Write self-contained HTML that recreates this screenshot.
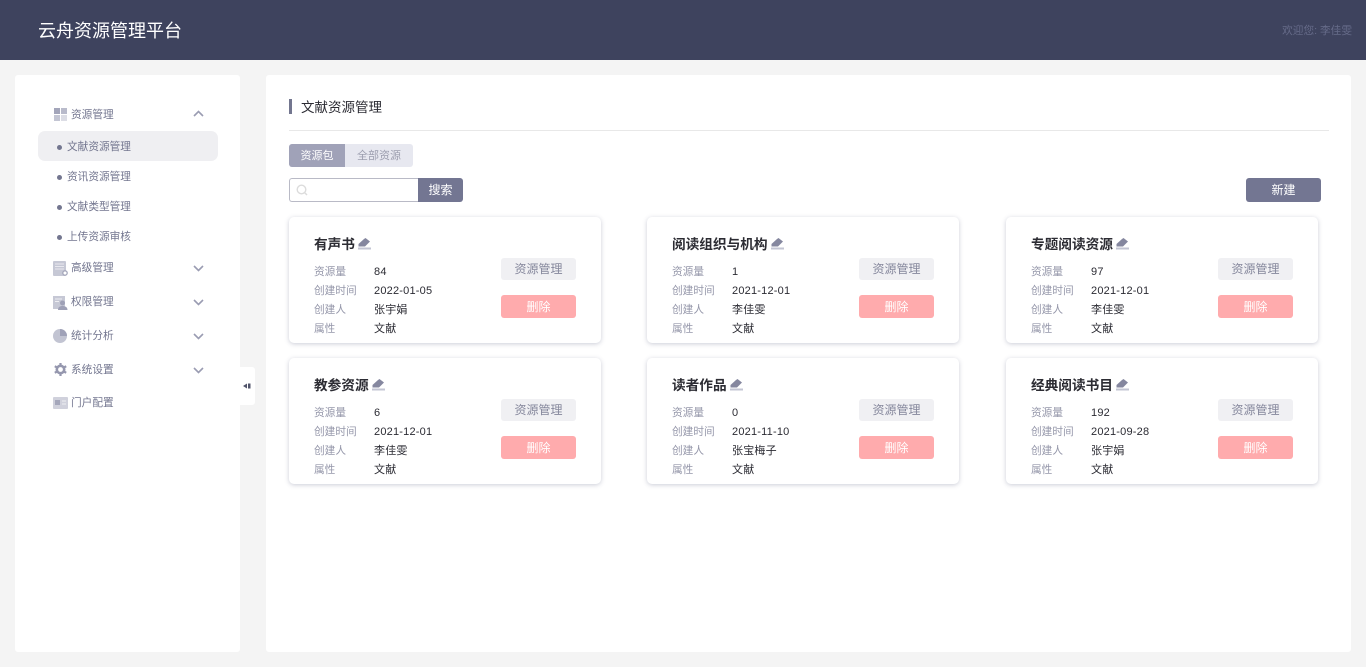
<!DOCTYPE html>
<html lang="zh-CN"><head><meta charset="utf-8"><title>云舟资源管理平台</title>
<style>
*{box-sizing:border-box;margin:0;padding:0}
html,body{width:1366px;height:667px;overflow:hidden;background:#f4f4f4;font-family:"Liberation Sans","WenQuanYi Zen Hei","Noto Sans CJK SC",sans-serif;font-size:12px}
.a{position:absolute}
.t{position:absolute;white-space:nowrap;line-height:20px;height:20px}
.hd{left:0;top:0;width:1366px;height:60px;background:#3e435e}
.panel{background:#fff;border-radius:3px}
.m{color:#73768f;font-size:10.67px;margin-top:1px}
.dot{position:absolute;width:5px;height:5px;border-radius:50%;background:#73768f;left:57px}
.card{position:absolute;width:312px;height:126px;background:#fff;border-radius:5px;box-shadow:0 1px 5px rgba(70,74,110,.28)}
.card .n{position:absolute;left:25px;top:18px;line-height:20px;font-size:13.67px;font-weight:bold;color:#2c2c33;white-space:nowrap}
.card .n svg{margin-left:3px;vertical-align:-1px}
.l{position:absolute;left:25px;color:#9597aa;line-height:19px;white-space:nowrap;font-size:10.67px;margin-top:1px}
.v{position:absolute;left:85px;color:#2b2b33;line-height:19px;white-space:nowrap;font-size:11px;letter-spacing:.2px;margin-top:1px}
.b1{position:absolute;left:212px;top:41px;width:75px;height:22px;background:#f0f0f3;border-radius:3px;color:#85879c;text-align:center;line-height:23px;font-size:12px}
.b2{position:absolute;left:212px;top:78px;width:75px;height:23px;background:#ffabad;border-radius:3px;color:#fff;text-align:center;line-height:24px;font-size:12px}
</style></head><body>
<div class="a hd"></div>
<div class="t" style="left:38px;top:21px;font-size:18px;color:#fff">云舟资源管理平台</div>
<div class="t" style="right:14px;top:21px;font-size:10.67px;color:#666b89">欢迎您: 李佳雯</div>

<div class="a panel" style="left:15px;top:75px;width:225px;height:577px"></div>
<div class="a" style="left:240px;top:367px;width:15px;height:38px;background:#fff;border-radius:0 3px 3px 0"></div>
<svg class="a" style="left:243px;top:383px" width="8" height="6" viewBox="0 0 8 6"><path d="M0 3L4 .5V5.500z" fill="#50536a"/><rect x="5" y=".5" width="2.500" height="5" fill="#50536a"/></svg>

<svg class="a" style="left:54px;top:108px" width="13" height="13" viewBox="0 0 13 13"><rect width="6" height="6" fill="#a3a5ba"/><rect x="7" width="6" height="6" fill="#b9bbcb"/><rect y="7" width="6" height="6" fill="#c3c5d3"/><rect x="7" y="7" width="6" height="6" fill="#dcdde5"/></svg>
<div class="t m" style="left:71px;top:104px">资源管理</div>
<svg class="a" style="left:193px;top:110px" width="11" height="7" viewBox="0 0 11 7"><path d="M1 6L5.500 1.500 10 6" fill="none" stroke="#9a9cb2" stroke-width="1.600"/></svg>
<div class="a" style="left:38px;top:131px;width:180px;height:30px;background:#efeff2;border-radius:7px"></div>
<div class="dot" style="top:145px"></div><div class="t m" style="left:67px;top:136px">文献资源管理</div>
<div class="dot" style="top:175px"></div><div class="t m" style="left:67px;top:166px">资讯资源管理</div>
<div class="dot" style="top:205px"></div><div class="t m" style="left:67px;top:196px">文献类型管理</div>
<div class="dot" style="top:235px"></div><div class="t m" style="left:67px;top:226px">上传资源审核</div>

<svg class="a" style="left:53px;top:261px" width="15" height="15" viewBox="0 0 15 15"><rect width="13" height="15" rx="1" fill="#c6c8d5"/><path d="M2 3h9M2 5.500h9M2 8h9" stroke="#e9e9ef" stroke-width="1"/><circle cx="12" cy="12" r="2.200" fill="#fff" stroke="#a5a7bb" stroke-width="1.300"/></svg>
<div class="t m" style="left:71px;top:257px">高级管理</div>
<svg class="a" style="left:193px;top:265px" width="11" height="7" viewBox="0 0 11 7"><path d="M1 1l4.500 4.500L10 1" fill="none" stroke="#9a9cb2" stroke-width="1.600"/></svg>

<svg class="a" style="left:53px;top:295px" width="15" height="15" viewBox="0 0 15 15"><rect y="1" width="12" height="13" fill="#c6c8d5"/><path d="M2 4h7M2 6.500h4" stroke="#eeeef2"/><circle cx="9.500" cy="8" r="2.500" fill="#9ea0b6"/><path d="M5 15c0-3 2-4 4.500-4s5 1 5 4z" fill="#9ea0b6"/></svg>
<div class="t m" style="left:71px;top:291px">权限管理</div>
<svg class="a" style="left:193px;top:299px" width="11" height="7" viewBox="0 0 11 7"><path d="M1 1l4.500 4.500L10 1" fill="none" stroke="#9a9cb2" stroke-width="1.600"/></svg>

<svg class="a" style="left:53px;top:329px" width="14" height="14" viewBox="0 0 14 14"><circle cx="7" cy="7" r="7" fill="#c2c4d2"/><path d="M7 0a7 7 0 0 1 7 7H7z" fill="#a0a2b8"/></svg>
<div class="t m" style="left:71px;top:325px">统计分析</div>
<svg class="a" style="left:193px;top:333px" width="11" height="7" viewBox="0 0 11 7"><path d="M1 1l4.500 4.500L10 1" fill="none" stroke="#9a9cb2" stroke-width="1.600"/></svg>

<svg class="a" style="left:54px;top:363px" width="13" height="13" viewBox="0 0 13 13"><circle cx="6.500" cy="6.500" r="3.700" fill="none" stroke="#9597ae" stroke-width="2.600"/><path d="M6.500 0v2.500M6.500 10.500V13M.8 3.200L3 4.500M10 8.500l2.200 1.300M.8 9.800L3 8.500M10 4.500l2.200-1.300" stroke="#9597ae" stroke-width="2.200"/></svg>
<div class="t m" style="left:71px;top:359px">系统设置</div>
<svg class="a" style="left:193px;top:367px" width="11" height="7" viewBox="0 0 11 7"><path d="M1 1l4.500 4.500L10 1" fill="none" stroke="#9a9cb2" stroke-width="1.600"/></svg>

<svg class="a" style="left:53px;top:397px" width="15" height="12" viewBox="0 0 15 12"><rect width="15" height="12" rx="1" fill="#d0d1dc"/><rect x="2" y="3" width="5" height="5" fill="#a5a7bb"/><path d="M9 4h4M9 7h4" stroke="#eeeef2"/></svg>
<div class="t m" style="left:71px;top:392px">门户配置</div>

<div class="a panel" style="left:266px;top:75px;width:1085px;height:577px"></div>
<div class="a" style="left:289px;top:99px;width:3px;height:15px;background:#73768f"></div>
<div class="t" style="left:301px;top:98px;font-size:13.5px;color:#2b2b33">文献资源管理</div>
<div class="a" style="left:289px;top:130px;width:1040px;height:1px;background:#e8e8e8"></div>

<div class="a" style="left:289px;top:144px;width:124px;height:23px;background:#e7e8f0;border-radius:3px"></div>
<div class="a" style="left:289px;top:144px;width:56px;height:23px;background:#a0a2b8;border-radius:3px 0 0 3px;color:#fff;text-align:center;line-height:25px;font-size:11px">资源包</div>
<div class="a" style="left:345px;top:144px;width:68px;height:23px;color:#9c9eaf;text-align:center;line-height:25px;font-size:11px">全部资源</div>

<div class="a" style="left:289px;top:178px;width:129px;height:24px;border:1px solid #b9bac6;border-right:0;border-radius:3px 0 0 3px;background:#fff"></div>
<svg class="a" style="left:296px;top:184px" width="12" height="12" viewBox="0 0 12 12"><circle cx="5.500" cy="5.500" r="4.300" fill="none" stroke="#dcdcdc" stroke-width="1.400"/><path d="M8.500 8.500l2.500 2.500" stroke="#dcdcdc" stroke-width="1.400"/></svg>
<div class="a" style="left:418px;top:178px;width:45px;height:24px;background:#737692;border-radius:0 3px 3px 0;color:#fff;text-align:center;line-height:25px;font-size:12px">搜索</div>
<div class="a" style="left:1246px;top:178px;width:75px;height:24px;background:#737692;border-radius:3px;color:#fff;text-align:center;line-height:25px;font-size:12px">新建</div>

<div class="card" style="left:289px;top:217px"><div class="n">有声书<svg width="13" height="12" viewBox="0 0 13 12"><path d="M.5 8.500V6L6 1 7.500 0l4.500 3.500-1.500 1.500-3.500 3.500z" fill="#85879f"/><rect y="9.500" width="13" height="2" fill="#c3c5d3"/></svg></div><div class="l" style="top:45px">资源量</div><div class="v" style="top:45px">84</div><div class="l" style="top:64px">创建时间</div><div class="v" style="top:64px">2022-01-05</div><div class="l" style="top:83px">创建人</div><div class="v" style="top:83px">张宇娟</div><div class="l" style="top:102px">属性</div><div class="v" style="top:102px">文献</div><div class="b1">资源管理</div><div class="b2">删除</div></div>

<div class="card" style="left:647px;top:217px"><div class="n">阅读组织与机构<svg width="13" height="12" viewBox="0 0 13 12"><path d="M.5 8.500V6L6 1 7.500 0l4.500 3.500-1.500 1.500-3.500 3.500z" fill="#85879f"/><rect y="9.500" width="13" height="2" fill="#c3c5d3"/></svg></div><div class="l" style="top:45px">资源量</div><div class="v" style="top:45px">1</div><div class="l" style="top:64px">创建时间</div><div class="v" style="top:64px">2021-12-01</div><div class="l" style="top:83px">创建人</div><div class="v" style="top:83px">李佳雯</div><div class="l" style="top:102px">属性</div><div class="v" style="top:102px">文献</div><div class="b1">资源管理</div><div class="b2">删除</div></div>

<div class="card" style="left:1006px;top:217px"><div class="n">专题阅读资源<svg width="13" height="12" viewBox="0 0 13 12"><path d="M.5 8.500V6L6 1 7.500 0l4.500 3.500-1.500 1.500-3.500 3.500z" fill="#85879f"/><rect y="9.500" width="13" height="2" fill="#c3c5d3"/></svg></div><div class="l" style="top:45px">资源量</div><div class="v" style="top:45px">97</div><div class="l" style="top:64px">创建时间</div><div class="v" style="top:64px">2021-12-01</div><div class="l" style="top:83px">创建人</div><div class="v" style="top:83px">李佳雯</div><div class="l" style="top:102px">属性</div><div class="v" style="top:102px">文献</div><div class="b1">资源管理</div><div class="b2">删除</div></div>

<div class="card" style="left:289px;top:358px"><div class="n">教参资源<svg width="13" height="12" viewBox="0 0 13 12"><path d="M.5 8.500V6L6 1 7.500 0l4.500 3.500-1.500 1.500-3.500 3.500z" fill="#85879f"/><rect y="9.500" width="13" height="2" fill="#c3c5d3"/></svg></div><div class="l" style="top:45px">资源量</div><div class="v" style="top:45px">6</div><div class="l" style="top:64px">创建时间</div><div class="v" style="top:64px">2021-12-01</div><div class="l" style="top:83px">创建人</div><div class="v" style="top:83px">李佳雯</div><div class="l" style="top:102px">属性</div><div class="v" style="top:102px">文献</div><div class="b1">资源管理</div><div class="b2">删除</div></div>

<div class="card" style="left:647px;top:358px"><div class="n">读者作品<svg width="13" height="12" viewBox="0 0 13 12"><path d="M.5 8.500V6L6 1 7.500 0l4.500 3.500-1.500 1.500-3.500 3.500z" fill="#85879f"/><rect y="9.500" width="13" height="2" fill="#c3c5d3"/></svg></div><div class="l" style="top:45px">资源量</div><div class="v" style="top:45px">0</div><div class="l" style="top:64px">创建时间</div><div class="v" style="top:64px">2021-11-10</div><div class="l" style="top:83px">创建人</div><div class="v" style="top:83px">张宝梅子</div><div class="l" style="top:102px">属性</div><div class="v" style="top:102px">文献</div><div class="b1">资源管理</div><div class="b2">删除</div></div>

<div class="card" style="left:1006px;top:358px"><div class="n">经典阅读书目<svg width="13" height="12" viewBox="0 0 13 12"><path d="M.5 8.500V6L6 1 7.500 0l4.500 3.500-1.500 1.500-3.500 3.500z" fill="#85879f"/><rect y="9.500" width="13" height="2" fill="#c3c5d3"/></svg></div><div class="l" style="top:45px">资源量</div><div class="v" style="top:45px">192</div><div class="l" style="top:64px">创建时间</div><div class="v" style="top:64px">2021-09-28</div><div class="l" style="top:83px">创建人</div><div class="v" style="top:83px">张宇娟</div><div class="l" style="top:102px">属性</div><div class="v" style="top:102px">文献</div><div class="b1">资源管理</div><div class="b2">删除</div></div>
</body></html>
